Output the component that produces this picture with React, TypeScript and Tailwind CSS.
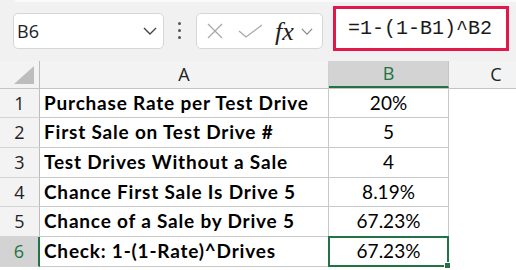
import * as React from "react";

type Row = { n: number; label: string; value: string; h: string };

const rows: Row[] = [
  { n: 1, label: "Purchase Rate per Test Drive", value: "20%", h: "h-[29px]" },
  { n: 2, label: "First Sale on Test Drive #", value: "5", h: "h-[30px]" },
  { n: 3, label: "Test Drives Without a Sale", value: "4", h: "h-[30px]" },
  { n: 4, label: "Chance First Sale Is Drive 5", value: "8.19%", h: "h-[29px]" },
  { n: 5, label: "Chance of a Sale by Drive 5", value: "67.23%", h: "h-[30px]" },
  { n: 6, label: "Check: 1-(1-Rate)^Drives", value: "67.23%", h: "h-[30px]" },
];

const uiFont = { fontFamily: '"Open Sans", "Noto Sans", sans-serif' };
const cellFont = { fontFamily: 'Lato, "Liberation Sans", sans-serif' };

function Chevron({ className }: { className?: string }) {
  return (
    <svg viewBox="0 0 14 8" className={className} fill="none">
      <polyline points="1,1 7,7 13,1" stroke="currentColor" strokeWidth="1.4" />
    </svg>
  );
}

export default function App() {
  return (
    <div className="w-[516px] h-[270px] overflow-hidden bg-white text-black">
      {/* formula toolbar */}
      <div className="h-[61px] bg-[#f1f1f1] flex flex-col">
        <div className="h-[2px] ml-[15px] bg-[#fafafa]" />
        <div className="flex items-start">
          <div className="ml-[13px] mt-[11px] w-[151px] h-[36px] bg-white border border-[#d6d6d6] rounded-[5px] flex items-center pl-[3px] pr-[6px]">
            <span className="text-[18px] text-[#222] flex-1" style={uiFont}>
              B6
            </span>
            <Chevron className="w-[14px] h-[8px] text-[#444]" />
          </div>
          <div className="ml-[14px] mt-[20px] flex flex-col gap-[4px] w-[3px]">
            <span className="w-[3px] h-[3px] rounded-full bg-[#555]" />
            <span className="w-[3px] h-[3px] rounded-full bg-[#555]" />
            <span className="w-[3px] h-[3px] rounded-full bg-[#555]" />
          </div>
          <div className="ml-[15px] mt-[11px] w-[127px] h-[36px] bg-white border border-[#d6d6d6] rounded-[5px] flex items-center pl-[10px]">
            <svg viewBox="0 0 16 16" className="w-[16px] h-[16px] text-[#a8a8a8]" fill="none">
              <path d="M1 1 L15 15 M15 1 L1 15" stroke="currentColor" strokeWidth="1.3" />
            </svg>
            <svg viewBox="0 0 25 14" className="ml-[15px] w-[25px] h-[14px] text-[#a8a8a8]" fill="none">
              <polyline points="1,7 8,13 24,1" stroke="currentColor" strokeWidth="1.3" />
            </svg>
            <span
              className="ml-[12px] mt-[2px] text-[26px] italic leading-none text-[#222]"
              style={{ fontFamily: '"Liberation Serif", serif' }}
            >
              fx
            </span>
            <Chevron className="ml-[7px] w-[12px] h-[7px] text-[#888]" />
          </div>
          <div className="ml-[10px] mt-[4px] w-[176px] h-[45px] border-[3px] border-[#e0194a] bg-white flex items-center pl-[12px]">
            <span
              className="text-[20px] text-[#1a1a1a] leading-none"
              style={{ fontFamily: '"Liberation Mono", monospace' }}
            >
              =1-(1-B1)^B2
            </span>
          </div>
        </div>
      </div>

      {/* column headers */}
      <div className="flex h-[28px] bg-[#f3f3f3] border-b border-[#c4c4c4] text-[18px] text-[#222]" style={uiFont}>
        <div className="w-[40px] shrink-0 border-r border-[#bdbdbd] flex items-end justify-end pr-[5px] pb-[4px]">
          <svg viewBox="0 0 20 18" className="w-[20px] h-[18px]">
            <polygon points="20,0 20,18 0,18" fill="#bdbdbd" />
          </svg>
        </div>
        <div className="w-[289px] shrink-0 border-r border-[#d0d0d0] flex items-center justify-center">A</div>
        <div className="w-[120px] shrink-0 bg-[#d3d3d3] border-r border-[#c4c4c4] border-b-2 border-b-[#217346] flex items-center justify-center text-[#217346]">
          B
        </div>
        <div className="w-[94px] shrink-0 flex items-center justify-center">C</div>
      </div>

      {/* rows */}
      {rows.map((r) => {
        const sel = r.n === 6;
        return (
          <div key={r.n} className={`flex ${r.h}`}>
            <div
              className={`w-[40px] shrink-0 border-b border-[#d4d4d4] flex items-center justify-center text-[18px] ${
                sel
                  ? "bg-[#d3d3d3] text-[#217346] border-r-2 border-r-[#217346]"
                  : "bg-[#f3f3f3] text-[#222] border-r border-r-[#bdbdbd]"
              }`}
              style={uiFont}
            >
              {r.n}
            </div>
            <div
              className="w-[289px] shrink-0 border-r border-b border-[#c8c8c8] flex items-center pl-[4px] text-[19px] font-bold tracking-[0.8px] whitespace-nowrap"
              style={cellFont}
            >
              {r.label}
            </div>
            <div
              className="relative w-[120px] shrink-0 border-r border-b border-[#c8c8c8] flex items-center justify-center text-[19px]"
              style={cellFont}
            >
              {r.value}
              {sel && (
                <div className="absolute -left-[1px] -top-[1px] -right-[1px] -bottom-[1px] border-2 border-[#217346]">
                  <span className="absolute -right-[4px] -bottom-[4px] w-[7px] h-[7px] bg-[#217346] border border-white" />
                </div>
              )}
            </div>
          </div>
        );
      })}
    </div>
  );
}
